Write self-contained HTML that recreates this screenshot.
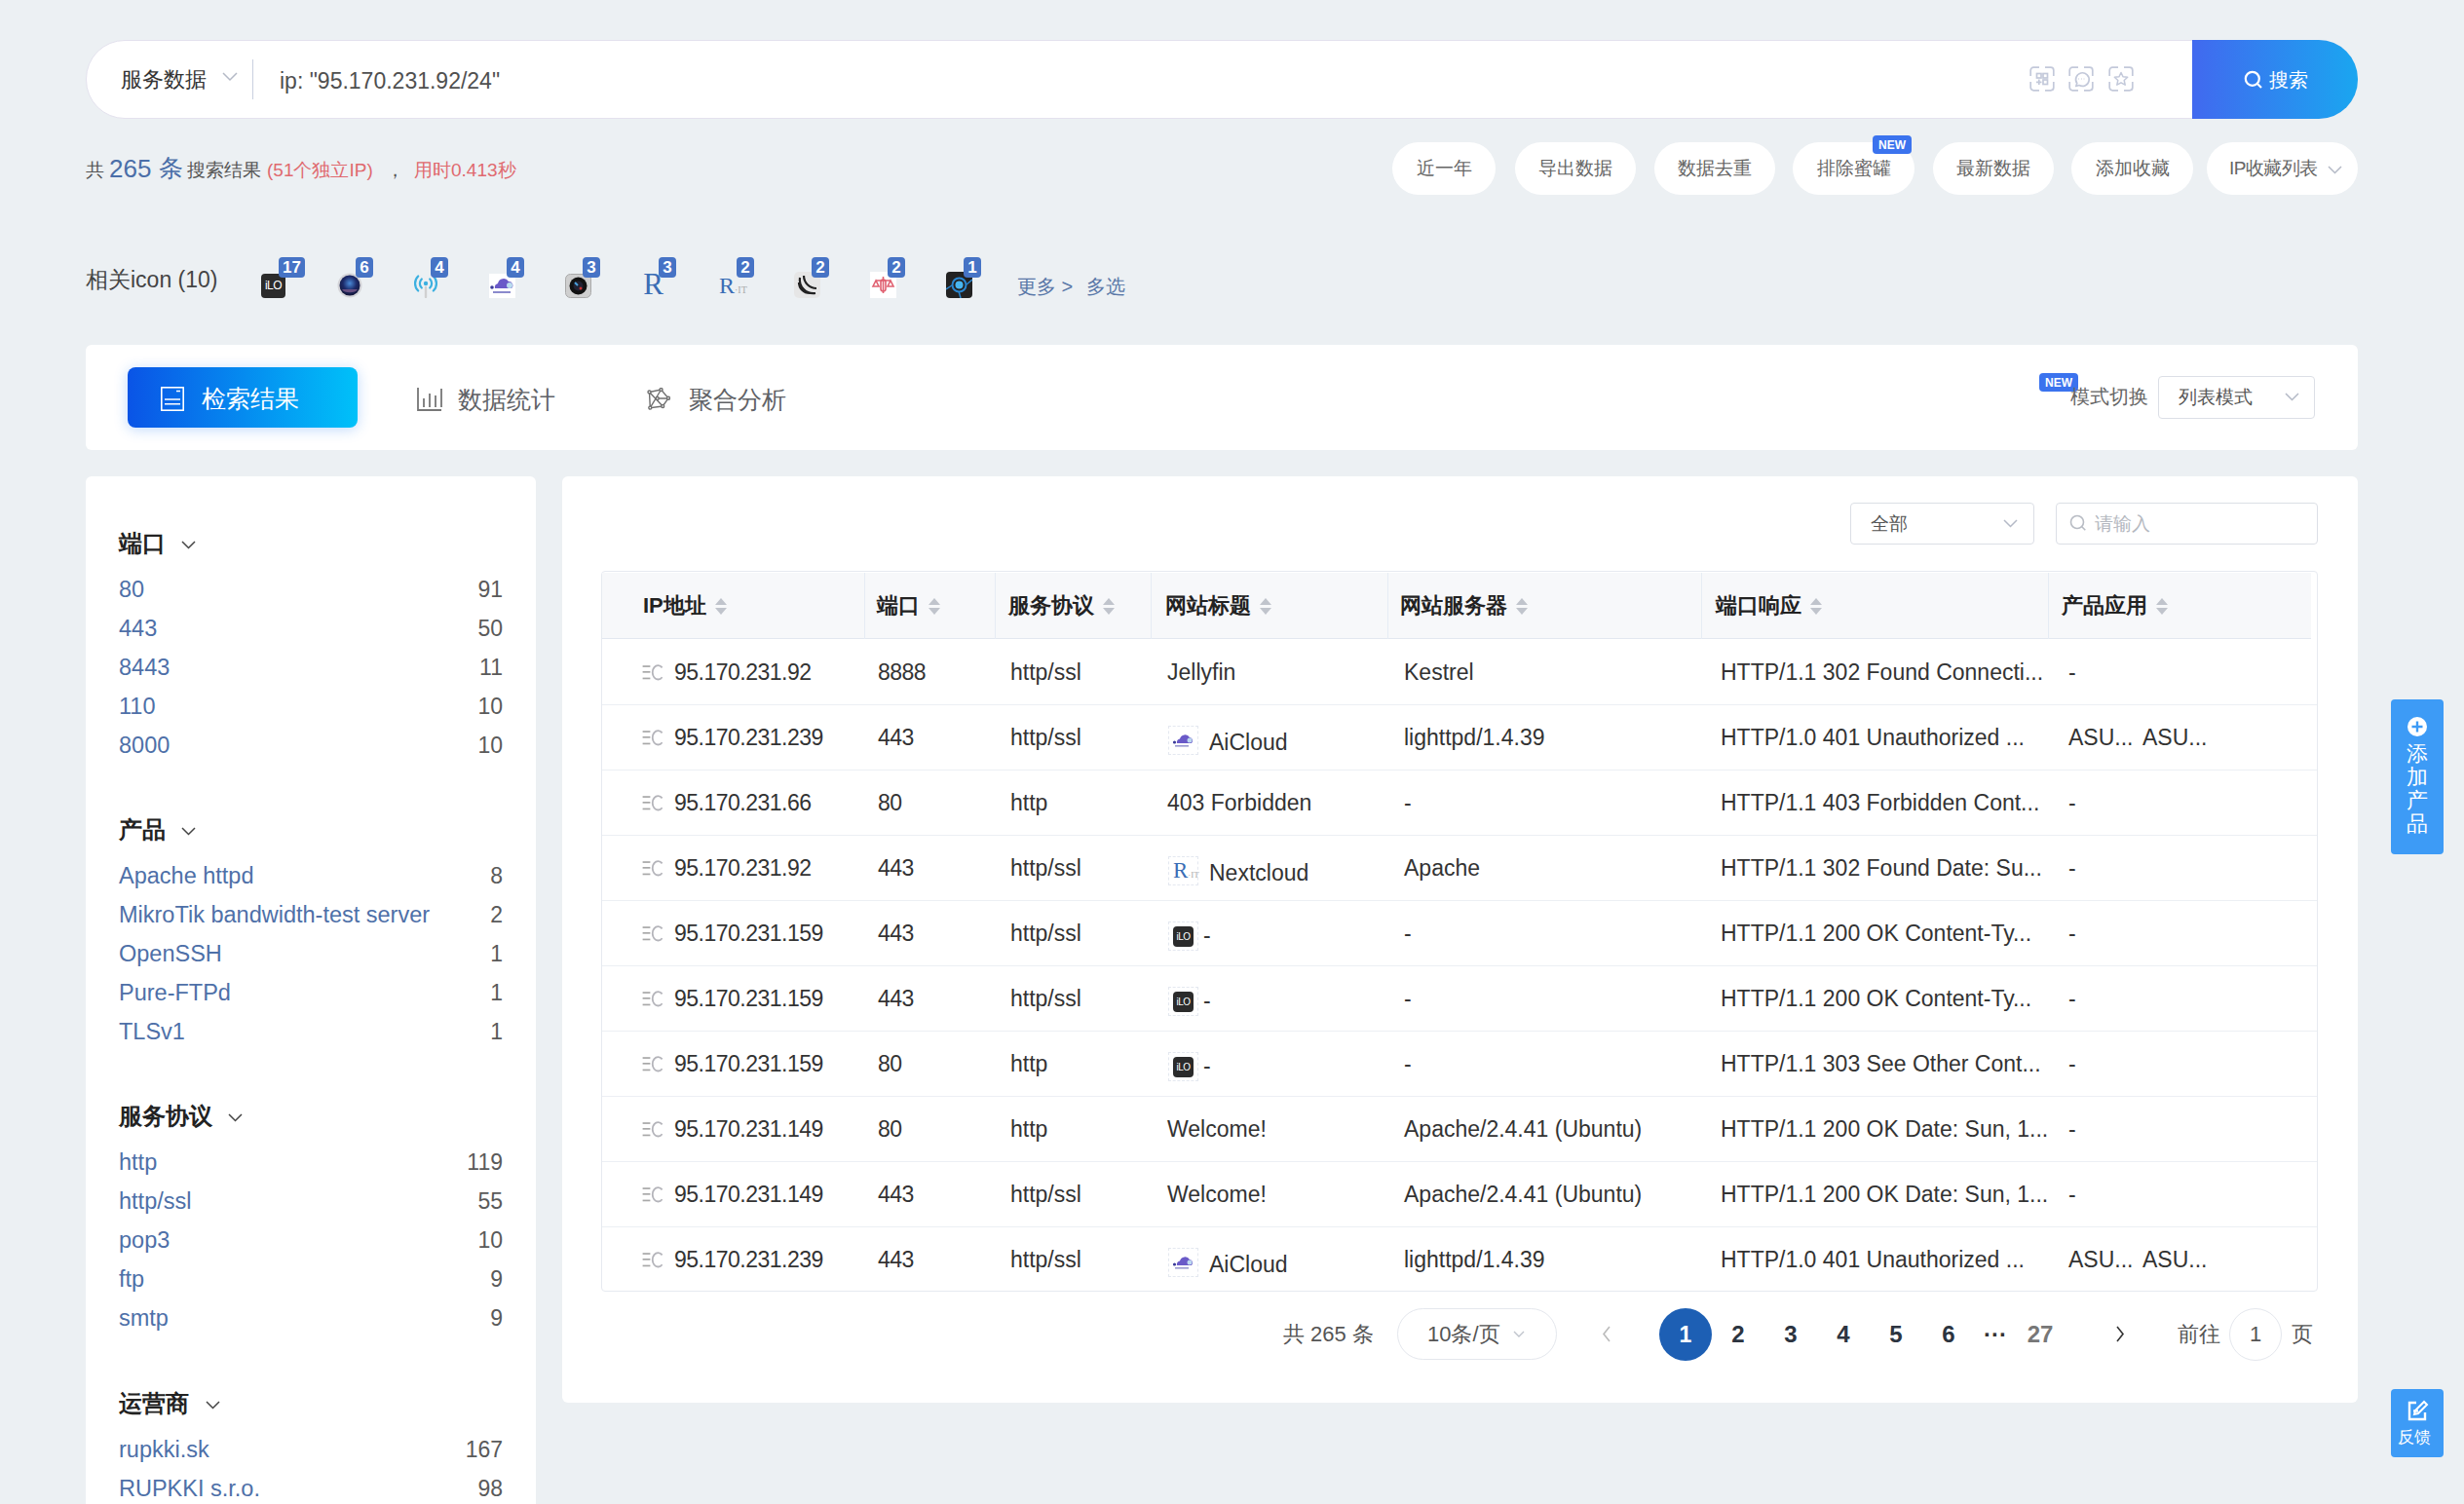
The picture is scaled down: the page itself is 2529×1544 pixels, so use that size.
<!DOCTYPE html>
<html><head><meta charset="utf-8">
<style>
*{box-sizing:border-box;margin:0;padding:0}
html,body{width:2529px;height:1544px;overflow:hidden;background:#ecf0f3;font-family:"Liberation Sans",sans-serif;color:#333}
.abs{position:absolute}
.nw{white-space:nowrap}
/* search bar */
#sbar{left:88px;top:41px;width:2332px;height:81px;background:#fff;border:1px solid #e4e2ee;border-radius:40px;}
#sbtn{left:2250px;top:41px;width:170px;height:81px;border-radius:0 40px 40px 0;background:linear-gradient(90deg,#4169ef,#1aa6f0);color:#fff;font-size:23px}
.pill{position:absolute;top:146px;height:54px;border-radius:27px;background:#fff;color:#666;font-size:19px;display:flex;align-items:center;justify-content:center}
.newb{position:absolute;background:#3b73ee;color:#fff;font-size:12px;font-weight:bold;border-radius:4px;display:flex;align-items:center;justify-content:center}
.ico{position:absolute;top:281px;width:26px;height:26px}
.badge{position:absolute;top:264px;height:21px;min-width:18px;padding:0 3px;background:#4673c5;color:#fff;font-size:17px;font-weight:bold;border-radius:4px;display:flex;align-items:center;justify-content:center;line-height:1}
.card{position:absolute;background:#fff;border-radius:6px}
.lp-h{position:absolute;left:122px;font-size:24px;font-weight:bold;color:#222}
.lp-i{position:absolute;left:122px;font-size:23.5px;color:#4e70a8}
.lp-c{position:absolute;right:2015px;font-size:22px;color:#555;text-align:right}
.th{position:absolute;top:588px;height:68px;font-size:22px;font-weight:bold;color:#222;display:flex;align-items:center}
.td{position:absolute;font-size:23px;color:#333;white-space:nowrap}
.ip{letter-spacing:-0.5px}
.sort{display:inline-block;width:13px;height:17px;margin-left:9px;position:relative}
.sort:before{content:"";position:absolute;left:0;top:0;border-left:6.5px solid transparent;border-right:6.5px solid transparent;border-bottom:7px solid #c0c4cc}
.sort:after{content:"";position:absolute;left:0;bottom:0;border-left:6.5px solid transparent;border-right:6.5px solid transparent;border-top:7px solid #c0c4cc}
.pg{position:absolute;top:1343px;height:54px;font-size:24px;font-weight:bold;color:#2c3440;display:flex;align-items:center;justify-content:center}
</style></head><body>

<!-- search bar -->
<div id="sbar" class="abs"></div>
<div class="abs nw" style="left:124px;top:67px;font-size:22px;color:#333;line-height:30px">服务数据</div>
<svg class="abs" style="left:228px;top:74px" width="16" height="10" viewBox="0 0 16 10"><path d="M1 1 L8 8 L15 1" fill="none" stroke="#b4b9c6" stroke-width="1.5"/></svg>
<div class="abs" style="left:259px;top:61px;width:1px;height:41px;background:#c9d0e0"></div>
<div class="abs nw" style="left:287px;top:68px;font-size:23px;color:#505050;line-height:30px">ip: "95.170.231.92/24"</div>
<div id="sbtn" class="abs"></div>
<!-- search bar icons -->
<svg class="abs" style="left:2083px;top:68px" width="26" height="26" viewBox="0 0 26 26" fill="none" stroke="#c3c9da" stroke-width="1.7"><path d="M1.2 10V4.2a3 3 0 0 1 3-3H10M16 1.2h5.8a3 3 0 0 1 3 3V10M24.8 16v5.8a3 3 0 0 1-3 3H16M10 24.8H4.2a3 3 0 0 1-3-3V16"/>
<rect x="7.5" y="7.5" width="4.5" height="4.5"/><rect x="14" y="7.5" width="4.5" height="4.5"/><rect x="14" y="14" width="4.5" height="4.5"/><path d="M7 16.3h5.5M9.8 13.5v5.5"/></svg>
<svg class="abs" style="left:2123px;top:68px" width="26" height="26" viewBox="0 0 26 26" fill="none" stroke="#c3c9da" stroke-width="1.7"><path d="M1.2 10V4.2a3 3 0 0 1 3-3H10M16 1.2h5.8a3 3 0 0 1 3 3V10M24.8 16v5.8a3 3 0 0 1-3 3H16M10 24.8H4.2a3 3 0 0 1-3-3V16"/>
<path d="M8.8 17.5A6.8 6.8 0 1 1 11 19.5L7.8 20.5z" stroke-linejoin="round"/><path d="M10.3 13h.6M13 13h.6M15.7 13h.6" stroke-width="1.5"/></svg>
<svg class="abs" style="left:2164px;top:68px" width="26" height="26" viewBox="0 0 26 26" fill="none" stroke="#c3c9da" stroke-width="1.7"><path d="M1.2 10V4.2a3 3 0 0 1 3-3H10M16 1.2h5.8a3 3 0 0 1 3 3V10M24.8 16v5.8a3 3 0 0 1-3 3H16M10 24.8H4.2a3 3 0 0 1-3-3V16"/>
<path d="M13 6.5l2 4.3 4.7.5-3.5 3.2 1 4.7-4.2-2.4-4.2 2.4 1-4.7-3.5-3.2 4.7-.5z" stroke-width="1.5" stroke-linejoin="round"/></svg>
<svg class="abs" style="left:2303px;top:72px" width="20" height="20" viewBox="0 0 20 20" fill="none" stroke="#fff" stroke-width="2.2"><circle cx="8.8" cy="8.8" r="7"/><path d="M14 14l4 4"/></svg>
<div class="abs nw" style="left:2329px;top:67px;font-size:20px;color:#fff;line-height:30px">搜索</div>

<!-- results line -->
<div class="abs nw" style="left:88px;top:160px;font-size:19px;color:#555;line-height:30px">共</div>
<div class="abs nw" style="left:112px;top:156px;font-size:26px;color:#4a6ea8;line-height:34px">265</div>
<div class="abs nw" style="left:163px;top:155px;font-size:25px;color:#4a6ea8;line-height:34px">条</div>
<div class="abs nw" style="left:192px;top:160px;font-size:19px;color:#555;line-height:30px">搜索结果</div>
<div class="abs nw" style="left:274px;top:160px;font-size:19px;color:#e06a6f;line-height:30px">(51个独立IP)</div>
<div class="abs nw" style="left:396px;top:160px;font-size:19px;color:#555;line-height:30px">，</div>
<div class="abs nw" style="left:425px;top:160px;font-size:19px;color:#e06a6f;line-height:30px">用时0.413秒</div>

<!-- pills -->
<div class="pill" style="left:1429px;width:106px">近一年</div>
<div class="pill" style="left:1555px;width:124px">导出数据</div>
<div class="pill" style="left:1698px;width:124px">数据去重</div>
<div class="pill" style="left:1840px;width:125px">排除蜜罐</div>
<div class="newb" style="left:1922px;top:139px;width:40px;height:19px">NEW</div>
<div class="pill" style="left:1984px;width:124px">最新数据</div>
<div class="pill" style="left:2126px;width:125px">添加收藏</div>
<div class="pill" style="left:2265px;width:155px;justify-content:flex-start;padding-left:23px;letter-spacing:-0.5px">IP收藏列表
<svg style="position:absolute;left:124px;top:24px" width="15" height="9" viewBox="0 0 15 9"><path d="M1 1l6.5 6.5L14 1" fill="none" stroke="#b4b9c6" stroke-width="1.5"/></svg></div>

<!-- related icons -->
<div class="abs nw" style="left:88px;top:270px;font-size:23px;color:#444;line-height:34px">相关icon (10)</div>
<div class="abs" style="left:268px;top:281px;width:27px;height:27px"><div style="position:absolute;left:0;top:0;width:25px;height:25px;background:#2b2b2b;border-radius:4px;color:#fff;font-size:12px;line-height:25px;text-align:center;letter-spacing:-0.5px">iLO</div></div>
<div class="badge" style="left:286px;width:27px">17</div>
<div class="abs" style="left:346px;top:280px;width:27px;height:27px"><svg width="26" height="26" viewBox="0 0 26 26"><defs><radialGradient id="g1" cx="50%" cy="40%" r="60%"><stop offset="0" stop-color="#4a8ad8"/><stop offset=".55" stop-color="#1c2a6a"/><stop offset="1" stop-color="#15183a"/></radialGradient></defs><circle cx="13" cy="13" r="12.5" fill="#d4d4d8"/><circle cx="13" cy="13" r="10.5" fill="url(#g1)"/><path d="M5 17a8.5 5 0 0 0 16 0z" fill="#7a5a8a" opacity=".8"/></svg></div>
<div class="badge" style="left:365px;width:18px">6</div>
<div class="abs" style="left:424px;top:280px;width:27px;height:27px"><svg width="26" height="26" viewBox="0 0 26 26" fill="none" stroke="#3cb0e0" stroke-width="2.2" stroke-linecap="round"><circle cx="13" cy="11" r="2.2" fill="#3cb0e0" stroke="none"/><path d="M8.8 6.5a6.2 6.2 0 0 0 0 9M17.2 6.5a6.2 6.2 0 0 1 0 9M5.2 3.5a10.5 10.5 0 0 0 0 15M20.8 3.5a10.5 10.5 0 0 1 0 15"/><path d="M13 15v10" stroke="#d0d0d0" stroke-width="2.4"/></svg></div>
<div class="badge" style="left:442px;width:18px">4</div>
<div class="abs" style="left:502px;top:281px;width:27px;height:27px"><svg width="27" height="25" viewBox="0 0 27 25"><rect width="27" height="25" fill="#fff"/><path d="M6 15a4 4 0 0 1 3-5a6 6 0 0 1 11-2a4 4 0 0 1 3 7z" fill="#6a5ac8"/><circle cx="3" cy="14" r="1.8" fill="#3a3a9a"/><circle cx="21" cy="12" r="3" fill="#bde" /><rect x="4" y="18" width="18" height="2" fill="#8a8acc"/></svg></div>
<div class="badge" style="left:520px;width:18px">4</div>
<div class="abs" style="left:580px;top:281px;width:27px;height:27px"><svg width="27" height="25" viewBox="0 0 27 25"><rect x="0.5" y="0.5" width="26" height="24" rx="5" fill="#cfcfcf" stroke="#aaa"/><circle cx="13.5" cy="12.5" r="9" fill="#111"/><circle cx="13.5" cy="12.5" r="5" fill="#223"/><path d="M10 9l3 3" stroke="#4aa3e0" stroke-width="2"/><circle cx="16" cy="15" r="1.5" fill="#c33"/></svg></div>
<div class="badge" style="left:598px;width:18px">3</div>
<div class="abs" style="left:658px;top:281px;width:27px;height:27px"><div style="position:absolute;left:0;top:-4px;width:25px;height:30px;font-family:'Liberation Serif',serif;font-size:31px;color:#3a6db5;line-height:30px;text-align:center">R</div></div>
<div class="badge" style="left:676px;width:18px">3</div>
<div class="abs" style="left:738px;top:281px;width:27px;height:27px"><div style="position:absolute;left:0;top:-2px;width:25px;height:28px;font-family:'Liberation Serif',serif;font-size:24px;color:#3a6db5;line-height:28px">R<span style="font-size:10px;color:#aaa">·IT</span></div></div>
<div class="badge" style="left:756px;width:18px">2</div>
<div class="abs" style="left:815px;top:279px;width:27px;height:27px"><svg width="27" height="27" viewBox="0 0 27 27"><rect x="0" y="0" width="27" height="27" rx="5" fill="#e6e6e6"/><path d="M6 6a14 14 0 0 0 16 16M5 11a11 11 0 0 0 11 11M10 4a13 13 0 0 0 13 13" fill="none" stroke="#222" stroke-width="2.2"/></svg></div>
<div class="badge" style="left:833px;width:18px">2</div>
<div class="abs" style="left:893px;top:279px;width:27px;height:27px"><svg width="27" height="27" viewBox="0 0 27 27"><rect width="27" height="27" fill="#fff"/><path d="M13.5 5v17M6 9h15M6 9l-3 6h6zM21 9l-3 6h6z" fill="none" stroke="#e06070" stroke-width="1.6"/><rect x="11" y="8" width="5" height="12" rx="2.5" fill="none" stroke="#e06070" stroke-width="1.6"/></svg></div>
<div class="badge" style="left:911px;width:18px">2</div>
<div class="abs" style="left:971px;top:279px;width:27px;height:27px"><svg width="27" height="27" viewBox="0 0 27 27"><rect width="27" height="27" rx="4" fill="#222"/><circle cx="13.5" cy="13.5" r="7" fill="none" stroke="#2a86d0" stroke-width="2"/><circle cx="13.5" cy="13.5" r="4" fill="#48b6f0"/><path d="M0 18l6-4M21 13l6-5M13 20l2 7" stroke="#2a86d0" stroke-width="1.5"/></svg></div>
<div class="badge" style="left:989px;width:18px">1</div>
<div class="abs nw" style="left:1044px;top:279px;font-size:20px;color:#5a78a8;line-height:30px">更多 &gt;</div>
<div class="abs nw" style="left:1115px;top:279px;font-size:20px;color:#5a78a8;line-height:30px">多选</div>

<!-- tabs card -->
<div class="card" style="left:88px;top:354px;width:2332px;height:108px"></div>
<div class="abs" style="left:131px;top:377px;width:236px;height:62px;border-radius:8px;background:linear-gradient(90deg,#0a54e6,#00c1f9);box-shadow:0 2px 14px rgba(30,120,240,.28)"></div>
<svg class="abs" style="left:165px;top:397px" width="24" height="25" viewBox="0 0 24 25" fill="none" stroke="#fff" stroke-width="1.6"><rect x="0.8" y="0.8" width="22.4" height="23.4"/><path d="M4 13h16M4 17.8h16M16 4.5h4"/></svg>
<div class="abs nw" style="left:207px;top:393px;font-size:25px;color:#fff;line-height:32px">检索结果</div>
<svg class="abs" style="left:428px;top:398px" width="26" height="24" viewBox="0 0 26 24" fill="none" stroke="#777" stroke-width="1.8"><path d="M1 0v23h24M7 11v9M13 6v14M19 8v12M25 1v19"/></svg>
<div class="abs nw" style="left:470px;top:393px;font-size:24.5px;color:#606266;line-height:32px;margin-top:2px">数据统计</div>
<svg class="abs" style="left:664px;top:398px" width="24" height="24" viewBox="0 0 24 24" fill="none" stroke="#707070" stroke-width="1.4"><path d="M2.5 4.5L14.5 2 22 10.8 16.2 19 3.3 20.6z M2.5 4.5L16.2 19 M14.5 2L3.3 20.6 M22 10.8L10.7 11"/><g fill="#fff"><circle cx="2.5" cy="4.5" r="1.5"/><circle cx="14.5" cy="2" r="1.5"/><circle cx="22" cy="10.8" r="1.5"/><circle cx="16.2" cy="19" r="1.5"/><circle cx="3.3" cy="20.6" r="1.5"/><circle cx="10.7" cy="11" r="1.5"/></g></svg>
<div class="abs nw" style="left:707px;top:393px;font-size:24.5px;color:#606266;line-height:32px;margin-top:2px">聚合分析</div>
<div class="newb" style="left:2093px;top:383px;width:40px;height:19px">NEW</div>
<div class="abs nw" style="left:2125px;top:392px;font-size:20px;color:#666;line-height:30px">模式切换</div>
<div class="abs" style="left:2215px;top:386px;width:161px;height:44px;border:1px solid #dcdfe6;border-radius:4px"></div>
<div class="abs nw" style="left:2236px;top:393px;font-size:19px;color:#555;line-height:30px">列表模式</div>
<svg class="abs" style="left:2345px;top:403px" width="15" height="9" viewBox="0 0 15 9"><path d="M1 1l6.5 6.5L14 1" fill="none" stroke="#b4b9c6" stroke-width="1.5"/></svg>

<!-- left panel -->
<div class="card" style="left:88px;top:489px;width:462px;height:1100px"></div>
<div class="lp-h nw" style="top:542px;line-height:32px">端口</div>
<svg class="abs" style="left:186px;top:555px" width="15" height="9" viewBox="0 0 15 9"><path d="M1 1l6.5 6.5L14 1" fill="none" stroke="#444" stroke-width="1.5"/></svg>
<div class="lp-i nw" style="top:590px;line-height:30px">80</div>
<div class="abs nw" style="left:401px;width:115px;text-align:right;font-size:23px;color:#5a5a5a;top:590px;line-height:30px">91</div>
<div class="lp-i nw" style="top:630px;line-height:30px">443</div>
<div class="abs nw" style="left:401px;width:115px;text-align:right;font-size:23px;color:#5a5a5a;top:630px;line-height:30px">50</div>
<div class="lp-i nw" style="top:670px;line-height:30px">8443</div>
<div class="abs nw" style="left:401px;width:115px;text-align:right;font-size:23px;color:#5a5a5a;top:670px;line-height:30px">11</div>
<div class="lp-i nw" style="top:710px;line-height:30px">110</div>
<div class="abs nw" style="left:401px;width:115px;text-align:right;font-size:23px;color:#5a5a5a;top:710px;line-height:30px">10</div>
<div class="lp-i nw" style="top:750px;line-height:30px">8000</div>
<div class="abs nw" style="left:401px;width:115px;text-align:right;font-size:23px;color:#5a5a5a;top:750px;line-height:30px">10</div>
<div class="lp-h nw" style="top:836px;line-height:32px">产品</div>
<svg class="abs" style="left:186px;top:849px" width="15" height="9" viewBox="0 0 15 9"><path d="M1 1l6.5 6.5L14 1" fill="none" stroke="#444" stroke-width="1.5"/></svg>
<div class="lp-i nw" style="top:884px;line-height:30px">Apache httpd</div>
<div class="abs nw" style="left:401px;width:115px;text-align:right;font-size:23px;color:#5a5a5a;top:884px;line-height:30px">8</div>
<div class="lp-i nw" style="top:924px;line-height:30px">MikroTik bandwidth-test server</div>
<div class="abs nw" style="left:401px;width:115px;text-align:right;font-size:23px;color:#5a5a5a;top:924px;line-height:30px">2</div>
<div class="lp-i nw" style="top:964px;line-height:30px">OpenSSH</div>
<div class="abs nw" style="left:401px;width:115px;text-align:right;font-size:23px;color:#5a5a5a;top:964px;line-height:30px">1</div>
<div class="lp-i nw" style="top:1004px;line-height:30px">Pure-FTPd</div>
<div class="abs nw" style="left:401px;width:115px;text-align:right;font-size:23px;color:#5a5a5a;top:1004px;line-height:30px">1</div>
<div class="lp-i nw" style="top:1044px;line-height:30px">TLSv1</div>
<div class="abs nw" style="left:401px;width:115px;text-align:right;font-size:23px;color:#5a5a5a;top:1044px;line-height:30px">1</div>
<div class="lp-h nw" style="top:1130px;line-height:32px">服务协议</div>
<svg class="abs" style="left:234px;top:1143px" width="15" height="9" viewBox="0 0 15 9"><path d="M1 1l6.5 6.5L14 1" fill="none" stroke="#444" stroke-width="1.5"/></svg>
<div class="lp-i nw" style="top:1178px;line-height:30px">http</div>
<div class="abs nw" style="left:401px;width:115px;text-align:right;font-size:23px;color:#5a5a5a;top:1178px;line-height:30px">119</div>
<div class="lp-i nw" style="top:1218px;line-height:30px">http/ssl</div>
<div class="abs nw" style="left:401px;width:115px;text-align:right;font-size:23px;color:#5a5a5a;top:1218px;line-height:30px">55</div>
<div class="lp-i nw" style="top:1258px;line-height:30px">pop3</div>
<div class="abs nw" style="left:401px;width:115px;text-align:right;font-size:23px;color:#5a5a5a;top:1258px;line-height:30px">10</div>
<div class="lp-i nw" style="top:1298px;line-height:30px">ftp</div>
<div class="abs nw" style="left:401px;width:115px;text-align:right;font-size:23px;color:#5a5a5a;top:1298px;line-height:30px">9</div>
<div class="lp-i nw" style="top:1338px;line-height:30px">smtp</div>
<div class="abs nw" style="left:401px;width:115px;text-align:right;font-size:23px;color:#5a5a5a;top:1338px;line-height:30px">9</div>
<div class="lp-h nw" style="top:1425px;line-height:32px">运营商</div>
<svg class="abs" style="left:211px;top:1438px" width="15" height="9" viewBox="0 0 15 9"><path d="M1 1l6.5 6.5L14 1" fill="none" stroke="#444" stroke-width="1.5"/></svg>
<div class="lp-i nw" style="top:1473px;line-height:30px">rupkki.sk</div>
<div class="abs nw" style="left:401px;width:115px;text-align:right;font-size:23px;color:#5a5a5a;top:1473px;line-height:30px">167</div>
<div class="lp-i nw" style="top:1513px;line-height:30px">RUPKKI s.r.o.</div>
<div class="abs nw" style="left:401px;width:115px;text-align:right;font-size:23px;color:#5a5a5a;top:1513px;line-height:30px">98</div>
<!-- right panel -->
<div class="card" style="left:577px;top:489px;width:1843px;height:951px"></div>
<div class="abs" style="left:1899px;top:516px;width:189px;height:43px;border:1px solid #dcdfe6;border-radius:4px"></div>
<div class="abs nw" style="left:1920px;top:523px;font-size:19px;color:#555;line-height:30px">全部</div>
<svg class="abs" style="left:2056px;top:533px" width="15" height="9" viewBox="0 0 15 9"><path d="M1 1l6.5 6.5L14 1" fill="none" stroke="#b4b9c6" stroke-width="1.5"/></svg>
<div class="abs" style="left:2110px;top:516px;width:269px;height:43px;border:1px solid #dcdfe6;border-radius:4px"></div>
<svg class="abs" style="left:2124px;top:528px" width="18" height="18" viewBox="0 0 18 18" fill="none" stroke="#b8bcc4" stroke-width="1.6"><circle cx="8" cy="8" r="6.5"/><path d="M12.8 12.8l3.5 3.5"/></svg>
<div class="abs nw" style="left:2150px;top:523px;font-size:19px;color:#b4b8c0;line-height:30px">请输入</div>
<div class="abs" style="left:617px;top:586px;width:1762px;height:740px;border:1px solid #e6eaf0;border-radius:4px"></div>
<div class="abs" style="left:618px;top:588px;width:1754px;height:68px;background:#f7f8fa;border-bottom:1px solid #e2e8f0"></div>
<div class="abs" style="left:887px;top:588px;width:1px;height:68px;background:#e6ecf4"></div>
<div class="abs" style="left:1021px;top:588px;width:1px;height:68px;background:#e6ecf4"></div>
<div class="abs" style="left:1181px;top:588px;width:1px;height:68px;background:#e6ecf4"></div>
<div class="abs" style="left:1424px;top:588px;width:1px;height:68px;background:#e6ecf4"></div>
<div class="abs" style="left:1746px;top:588px;width:1px;height:68px;background:#e6ecf4"></div>
<div class="abs" style="left:2102px;top:588px;width:1px;height:68px;background:#e6ecf4"></div>
<div class="th nw" style="left:660px">IP地址<span class="sort"></span></div>
<div class="th nw" style="left:900px">端口<span class="sort"></span></div>
<div class="th nw" style="left:1035px">服务协议<span class="sort"></span></div>
<div class="th nw" style="left:1196px">网站标题<span class="sort"></span></div>
<div class="th nw" style="left:1437px">网站服务器<span class="sort"></span></div>
<div class="th nw" style="left:1761px">端口响应<span class="sort"></span></div>
<div class="th nw" style="left:2116px">产品应用<span class="sort"></span></div>
<svg class="abs" style="left:659px;top:681px" width="22" height="18" viewBox="0 0 22 18"><g fill="#a8a8a8"><rect x="0.6" y="2.2" width="7.8" height="1.7"/><rect x="0.6" y="8" width="7.8" height="1.7"/><rect x="0.6" y="14.6" width="7.8" height="1.7"/></g><path d="M20.6 4.4A5.7 7.2 0 1 0 20.6 14.2" fill="none" stroke="#b4b4ba" stroke-width="1.8"/></svg>
<div class="td ip" style="left:692px;top:675px;line-height:30px">95.170.231.92</div>
<div class="td ip" style="left:901px;top:675px;line-height:30px">8888</div>
<div class="td" style="left:1037px;top:675px;line-height:30px">http/ssl</div>
<div class="td" style="left:1198px;top:675px;line-height:30px">Jellyfin</div>
<div class="td" style="left:1441px;top:675px;line-height:30px">Kestrel</div>
<div class="td" style="left:1766px;top:675px;line-height:30px">HTTP/1.1 302 Found Connecti...</div>
<div class="td" style="left:2123px;top:675px;line-height:30px">-</div>
<div class="abs" style="left:618px;top:723px;width:1760px;height:1px;background:#eceff4"></div>
<svg class="abs" style="left:659px;top:748px" width="22" height="18" viewBox="0 0 22 18"><g fill="#a8a8a8"><rect x="0.6" y="2.2" width="7.8" height="1.7"/><rect x="0.6" y="8" width="7.8" height="1.7"/><rect x="0.6" y="14.6" width="7.8" height="1.7"/></g><path d="M20.6 4.4A5.7 7.2 0 1 0 20.6 14.2" fill="none" stroke="#b4b4ba" stroke-width="1.8"/></svg>
<div class="td ip" style="left:692px;top:742px;line-height:30px">95.170.231.239</div>
<div class="td ip" style="left:901px;top:742px;line-height:30px">443</div>
<div class="td" style="left:1037px;top:742px;line-height:30px">http/ssl</div>
<div class="abs" style="left:1199px;top:745px;width:31px;height:30px;border:1px dashed #e4e8f0;background:#fff"><svg style="position:absolute;left:3px;top:5px" width="24" height="18" viewBox="0 0 24 18"><path d="M5 12a3.5 3.5 0 0 1 3-4.5a5.5 5.5 0 0 1 10-1.5a3.5 3.5 0 0 1 2 6z" fill="#6a5ac8"/><circle cx="2.5" cy="11" r="1.6" fill="#3a3a9a"/><circle cx="18" cy="9" r="2.5" fill="#bcd8f0"/><rect x="3" y="14" width="14" height="1.6" fill="#9a9ad0"/></svg></div>
<div class="td" style="left:1241px;top:747px;line-height:30px">AiCloud</div>
<div class="td" style="left:1441px;top:742px;line-height:30px">lighttpd/1.4.39</div>
<div class="td" style="left:1766px;top:742px;line-height:30px">HTTP/1.0 401 Unauthorized ...</div>
<div class="td" style="left:2123px;top:742px;line-height:30px">ASU...</div>
<div class="td" style="left:2199px;top:742px;line-height:30px">ASU...</div>
<div class="abs" style="left:618px;top:790px;width:1760px;height:1px;background:#eceff4"></div>
<svg class="abs" style="left:659px;top:815px" width="22" height="18" viewBox="0 0 22 18"><g fill="#a8a8a8"><rect x="0.6" y="2.2" width="7.8" height="1.7"/><rect x="0.6" y="8" width="7.8" height="1.7"/><rect x="0.6" y="14.6" width="7.8" height="1.7"/></g><path d="M20.6 4.4A5.7 7.2 0 1 0 20.6 14.2" fill="none" stroke="#b4b4ba" stroke-width="1.8"/></svg>
<div class="td ip" style="left:692px;top:809px;line-height:30px">95.170.231.66</div>
<div class="td ip" style="left:901px;top:809px;line-height:30px">80</div>
<div class="td" style="left:1037px;top:809px;line-height:30px">http</div>
<div class="td" style="left:1198px;top:809px;line-height:30px">403 Forbidden</div>
<div class="td" style="left:1441px;top:809px;line-height:30px">-</div>
<div class="td" style="left:1766px;top:809px;line-height:30px">HTTP/1.1 403 Forbidden Cont...</div>
<div class="td" style="left:2123px;top:809px;line-height:30px">-</div>
<div class="abs" style="left:618px;top:857px;width:1760px;height:1px;background:#eceff4"></div>
<svg class="abs" style="left:659px;top:882px" width="22" height="18" viewBox="0 0 22 18"><g fill="#a8a8a8"><rect x="0.6" y="2.2" width="7.8" height="1.7"/><rect x="0.6" y="8" width="7.8" height="1.7"/><rect x="0.6" y="14.6" width="7.8" height="1.7"/></g><path d="M20.6 4.4A5.7 7.2 0 1 0 20.6 14.2" fill="none" stroke="#b4b4ba" stroke-width="1.8"/></svg>
<div class="td ip" style="left:692px;top:876px;line-height:30px">95.170.231.92</div>
<div class="td ip" style="left:901px;top:876px;line-height:30px">443</div>
<div class="td" style="left:1037px;top:876px;line-height:30px">http/ssl</div>
<div class="abs" style="left:1199px;top:879px;width:31px;height:30px;border:1px dashed #e4e8f0;background:#fff;font-family:'Liberation Serif',serif;font-size:23px;color:#3a6db5;line-height:28px;padding-left:4px">R<span style="font-size:9px;color:#aaa">·IT</span></div>
<div class="td" style="left:1241px;top:881px;line-height:30px">Nextcloud</div>
<div class="td" style="left:1441px;top:876px;line-height:30px">Apache</div>
<div class="td" style="left:1766px;top:876px;line-height:30px">HTTP/1.1 302 Found Date: Su...</div>
<div class="td" style="left:2123px;top:876px;line-height:30px">-</div>
<div class="abs" style="left:618px;top:924px;width:1760px;height:1px;background:#eceff4"></div>
<svg class="abs" style="left:659px;top:949px" width="22" height="18" viewBox="0 0 22 18"><g fill="#a8a8a8"><rect x="0.6" y="2.2" width="7.8" height="1.7"/><rect x="0.6" y="8" width="7.8" height="1.7"/><rect x="0.6" y="14.6" width="7.8" height="1.7"/></g><path d="M20.6 4.4A5.7 7.2 0 1 0 20.6 14.2" fill="none" stroke="#b4b4ba" stroke-width="1.8"/></svg>
<div class="td ip" style="left:692px;top:943px;line-height:30px">95.170.231.159</div>
<div class="td ip" style="left:901px;top:943px;line-height:30px">443</div>
<div class="td" style="left:1037px;top:943px;line-height:30px">http/ssl</div>
<div class="abs" style="left:1199px;top:946px;width:31px;height:30px;border:1px dashed #e4e8f0;background:#fff"><div style="position:absolute;left:4px;top:4px;width:21px;height:21px;background:#2b2b2b;border-radius:4px;color:#fff;font-size:10px;line-height:21px;text-align:center;letter-spacing:-0.5px">iLO</div></div>
<div class="td" style="left:1235px;top:945px;line-height:30px">-</div>
<div class="td" style="left:1441px;top:943px;line-height:30px">-</div>
<div class="td" style="left:1766px;top:943px;line-height:30px">HTTP/1.1 200 OK Content-Ty...</div>
<div class="td" style="left:2123px;top:943px;line-height:30px">-</div>
<div class="abs" style="left:618px;top:991px;width:1760px;height:1px;background:#eceff4"></div>
<svg class="abs" style="left:659px;top:1016px" width="22" height="18" viewBox="0 0 22 18"><g fill="#a8a8a8"><rect x="0.6" y="2.2" width="7.8" height="1.7"/><rect x="0.6" y="8" width="7.8" height="1.7"/><rect x="0.6" y="14.6" width="7.8" height="1.7"/></g><path d="M20.6 4.4A5.7 7.2 0 1 0 20.6 14.2" fill="none" stroke="#b4b4ba" stroke-width="1.8"/></svg>
<div class="td ip" style="left:692px;top:1010px;line-height:30px">95.170.231.159</div>
<div class="td ip" style="left:901px;top:1010px;line-height:30px">443</div>
<div class="td" style="left:1037px;top:1010px;line-height:30px">http/ssl</div>
<div class="abs" style="left:1199px;top:1013px;width:31px;height:30px;border:1px dashed #e4e8f0;background:#fff"><div style="position:absolute;left:4px;top:4px;width:21px;height:21px;background:#2b2b2b;border-radius:4px;color:#fff;font-size:10px;line-height:21px;text-align:center;letter-spacing:-0.5px">iLO</div></div>
<div class="td" style="left:1235px;top:1012px;line-height:30px">-</div>
<div class="td" style="left:1441px;top:1010px;line-height:30px">-</div>
<div class="td" style="left:1766px;top:1010px;line-height:30px">HTTP/1.1 200 OK Content-Ty...</div>
<div class="td" style="left:2123px;top:1010px;line-height:30px">-</div>
<div class="abs" style="left:618px;top:1058px;width:1760px;height:1px;background:#eceff4"></div>
<svg class="abs" style="left:659px;top:1083px" width="22" height="18" viewBox="0 0 22 18"><g fill="#a8a8a8"><rect x="0.6" y="2.2" width="7.8" height="1.7"/><rect x="0.6" y="8" width="7.8" height="1.7"/><rect x="0.6" y="14.6" width="7.8" height="1.7"/></g><path d="M20.6 4.4A5.7 7.2 0 1 0 20.6 14.2" fill="none" stroke="#b4b4ba" stroke-width="1.8"/></svg>
<div class="td ip" style="left:692px;top:1077px;line-height:30px">95.170.231.159</div>
<div class="td ip" style="left:901px;top:1077px;line-height:30px">80</div>
<div class="td" style="left:1037px;top:1077px;line-height:30px">http</div>
<div class="abs" style="left:1199px;top:1080px;width:31px;height:30px;border:1px dashed #e4e8f0;background:#fff"><div style="position:absolute;left:4px;top:4px;width:21px;height:21px;background:#2b2b2b;border-radius:4px;color:#fff;font-size:10px;line-height:21px;text-align:center;letter-spacing:-0.5px">iLO</div></div>
<div class="td" style="left:1235px;top:1079px;line-height:30px">-</div>
<div class="td" style="left:1441px;top:1077px;line-height:30px">-</div>
<div class="td" style="left:1766px;top:1077px;line-height:30px">HTTP/1.1 303 See Other Cont...</div>
<div class="td" style="left:2123px;top:1077px;line-height:30px">-</div>
<div class="abs" style="left:618px;top:1125px;width:1760px;height:1px;background:#eceff4"></div>
<svg class="abs" style="left:659px;top:1150px" width="22" height="18" viewBox="0 0 22 18"><g fill="#a8a8a8"><rect x="0.6" y="2.2" width="7.8" height="1.7"/><rect x="0.6" y="8" width="7.8" height="1.7"/><rect x="0.6" y="14.6" width="7.8" height="1.7"/></g><path d="M20.6 4.4A5.7 7.2 0 1 0 20.6 14.2" fill="none" stroke="#b4b4ba" stroke-width="1.8"/></svg>
<div class="td ip" style="left:692px;top:1144px;line-height:30px">95.170.231.149</div>
<div class="td ip" style="left:901px;top:1144px;line-height:30px">80</div>
<div class="td" style="left:1037px;top:1144px;line-height:30px">http</div>
<div class="td" style="left:1198px;top:1144px;line-height:30px">Welcome!</div>
<div class="td" style="left:1441px;top:1144px;line-height:30px">Apache/2.4.41 (Ubuntu)</div>
<div class="td" style="left:1766px;top:1144px;line-height:30px">HTTP/1.1 200 OK Date: Sun, 1...</div>
<div class="td" style="left:2123px;top:1144px;line-height:30px">-</div>
<div class="abs" style="left:618px;top:1192px;width:1760px;height:1px;background:#eceff4"></div>
<svg class="abs" style="left:659px;top:1217px" width="22" height="18" viewBox="0 0 22 18"><g fill="#a8a8a8"><rect x="0.6" y="2.2" width="7.8" height="1.7"/><rect x="0.6" y="8" width="7.8" height="1.7"/><rect x="0.6" y="14.6" width="7.8" height="1.7"/></g><path d="M20.6 4.4A5.7 7.2 0 1 0 20.6 14.2" fill="none" stroke="#b4b4ba" stroke-width="1.8"/></svg>
<div class="td ip" style="left:692px;top:1211px;line-height:30px">95.170.231.149</div>
<div class="td ip" style="left:901px;top:1211px;line-height:30px">443</div>
<div class="td" style="left:1037px;top:1211px;line-height:30px">http/ssl</div>
<div class="td" style="left:1198px;top:1211px;line-height:30px">Welcome!</div>
<div class="td" style="left:1441px;top:1211px;line-height:30px">Apache/2.4.41 (Ubuntu)</div>
<div class="td" style="left:1766px;top:1211px;line-height:30px">HTTP/1.1 200 OK Date: Sun, 1...</div>
<div class="td" style="left:2123px;top:1211px;line-height:30px">-</div>
<div class="abs" style="left:618px;top:1259px;width:1760px;height:1px;background:#eceff4"></div>
<svg class="abs" style="left:659px;top:1284px" width="22" height="18" viewBox="0 0 22 18"><g fill="#a8a8a8"><rect x="0.6" y="2.2" width="7.8" height="1.7"/><rect x="0.6" y="8" width="7.8" height="1.7"/><rect x="0.6" y="14.6" width="7.8" height="1.7"/></g><path d="M20.6 4.4A5.7 7.2 0 1 0 20.6 14.2" fill="none" stroke="#b4b4ba" stroke-width="1.8"/></svg>
<div class="td ip" style="left:692px;top:1278px;line-height:30px">95.170.231.239</div>
<div class="td ip" style="left:901px;top:1278px;line-height:30px">443</div>
<div class="td" style="left:1037px;top:1278px;line-height:30px">http/ssl</div>
<div class="abs" style="left:1199px;top:1281px;width:31px;height:30px;border:1px dashed #e4e8f0;background:#fff"><svg style="position:absolute;left:3px;top:5px" width="24" height="18" viewBox="0 0 24 18"><path d="M5 12a3.5 3.5 0 0 1 3-4.5a5.5 5.5 0 0 1 10-1.5a3.5 3.5 0 0 1 2 6z" fill="#6a5ac8"/><circle cx="2.5" cy="11" r="1.6" fill="#3a3a9a"/><circle cx="18" cy="9" r="2.5" fill="#bcd8f0"/><rect x="3" y="14" width="14" height="1.6" fill="#9a9ad0"/></svg></div>
<div class="td" style="left:1241px;top:1283px;line-height:30px">AiCloud</div>
<div class="td" style="left:1441px;top:1278px;line-height:30px">lighttpd/1.4.39</div>
<div class="td" style="left:1766px;top:1278px;line-height:30px">HTTP/1.0 401 Unauthorized ...</div>
<div class="td" style="left:2123px;top:1278px;line-height:30px">ASU...</div>
<div class="td" style="left:2199px;top:1278px;line-height:30px">ASU...</div>
<div class="abs nw" style="left:1317px;top:1355px;font-size:22px;color:#555;line-height:30px">共 265 条</div>
<div class="abs" style="left:1434px;top:1343px;width:164px;height:53px;border:1px solid #e4e7ed;border-radius:27px"></div>
<div class="abs nw" style="left:1465px;top:1355px;font-size:22px;color:#555;line-height:30px">10条/页</div>
<svg class="abs" style="left:1553px;top:1366px" width="12" height="8" viewBox="0 0 12 8"><path d="M1 1l5 5 5-5" fill="none" stroke="#c0c4cc" stroke-width="1.4"/></svg>
<svg class="abs" style="left:1644px;top:1361px" width="10" height="17" viewBox="0 0 10 17"><path d="M8 1L2 8.5 8 16" fill="none" stroke="#bbb" stroke-width="1.6"/></svg>
<div class="abs" style="left:1703px;top:1343px;width:54px;height:54px;border-radius:27px;background:#1d5fb4;color:#fff;font-size:23px;font-weight:bold;display:flex;align-items:center;justify-content:center">1</div>
<div class="pg" style="left:1772px;width:24px">2</div>
<div class="pg" style="left:1826px;width:24px">3</div>
<div class="pg" style="left:1880px;width:24px">4</div>
<div class="pg" style="left:1934px;width:24px">5</div>
<div class="pg" style="left:1988px;width:24px">6</div>
<div class="pg" style="left:2036px;width:24px;color:#333">···</div>
<div class="pg" style="left:2078px;width:32px;color:#777">27</div>
<svg class="abs" style="left:2171px;top:1361px" width="10" height="17" viewBox="0 0 10 17"><path d="M2 1l6 7.5L2 16" fill="none" stroke="#333" stroke-width="1.6"/></svg>
<div class="abs nw" style="left:2235px;top:1355px;font-size:22px;color:#555;line-height:30px">前往</div>
<div class="abs" style="left:2288px;top:1343px;width:54px;height:54px;border:1px solid #e4e7ed;border-radius:27px;font-size:22px;color:#555;display:flex;align-items:center;justify-content:center">1</div>
<div class="abs nw" style="left:2352px;top:1355px;font-size:22px;color:#555;line-height:30px">页</div>

<div class="abs" style="left:2454px;top:718px;width:54px;height:159px;background:#3d9bf6;border-radius:4px"></div>
<svg class="abs" style="left:2470px;top:735px" width="22" height="22" viewBox="0 0 22 22"><circle cx="11" cy="11" r="10" fill="#fff"/><path d="M11 5.5v11M5.5 11h11" stroke="#3d9bf6" stroke-width="2.4"/></svg>
<div class="abs" style="left:2466px;top:762px;width:30px;font-size:22px;line-height:24px;color:#fff;text-align:center">添<br>加<br>产<br>品</div>
<div class="abs" style="left:2454px;top:1426px;width:54px;height:70px;background:#3d9bf6;border-radius:4px"></div>
<svg class="abs" style="left:2468px;top:1436px" width="26" height="26" viewBox="0 0 26 26" fill="none" stroke="#fff" stroke-width="2.4"><path d="M12 4H5v17h16v-7"/><path d="M10 16l1-4 9-9 3 3-9 9z" stroke-width="2"/><path d="M9 12.5h5" /></svg>
<div class="abs nw" style="left:2461px;top:1464px;font-size:17px;line-height:24px;color:#fff">反馈</div>

</body></html>
